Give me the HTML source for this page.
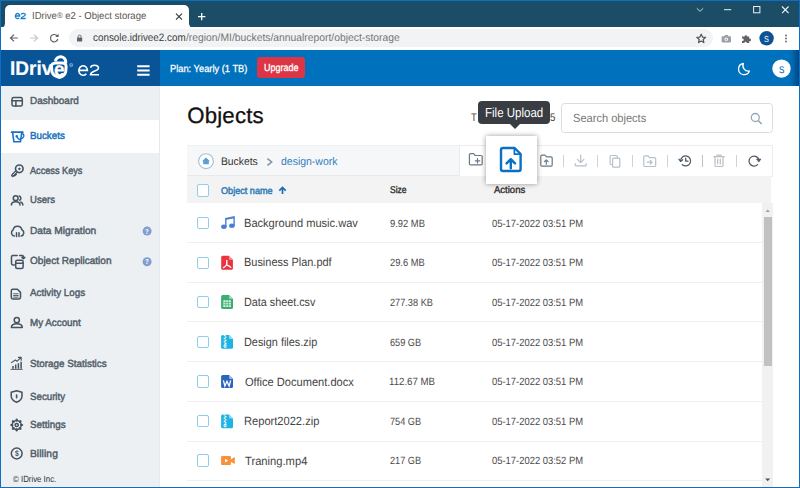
<!DOCTYPE html>
<html>
<head>
<meta charset="utf-8">
<title>IDrive e2 - Object storage</title>
<style>
*{box-sizing:border-box;margin:0;padding:0}
html,body{width:800px;height:488px;overflow:hidden;background:#fff;font-family:"Liberation Sans",sans-serif;}
#win{position:absolute;left:0;top:0;width:800px;height:488px;overflow:hidden;background:#fff}
.abs{position:absolute}
.t{position:absolute;white-space:nowrap;line-height:1;font-family:"Liberation Sans",sans-serif;text-rendering:geometricPrecision}
#titlebar{position:absolute;left:0;top:0;width:800px;height:27px;background:#1b4e66}
#tab{position:absolute;left:5px;top:5px;width:184px;height:23px;background:#fff;border-radius:5px 5px 0 0}
#toolbar{position:absolute;left:0;top:27px;width:800px;height:23px;background:#fff}
#omni{position:absolute;left:68.5px;top:29.2px;width:644px;height:17.8px;border-radius:9px;background:#f1f3f4}
#hdrL{position:absolute;left:0;top:49.5px;width:159.5px;height:36.3px;background:#095497}
#hdrR{position:absolute;left:159.5px;top:49.5px;width:640.5px;height:36.3px;background:#0071bc}
#side{position:absolute;left:0;top:85.8px;width:159.6px;height:402.2px;background:#ecf0f3}
#active{position:absolute;left:0;top:119.5px;width:159.6px;height:33.5px;background:#fff}
#sideb{position:absolute;left:158.9px;top:85.8px;width:1px;height:402.2px;background:#e3eaf0}
.bd{position:absolute;background:#0a6fc5}
.sep{position:absolute;left:187px;width:574.5px;height:1px;background:#efefef}
.cb{position:absolute;left:196.8px;width:12.3px;height:12.4px;border:1.15px solid #8fcdea;border-radius:2px;background:#fff;margin-top:-0.4px}
.vs{position:absolute;top:154.5px;width:1px;height:12.5px;background:#cfd4d9}
#ov{position:absolute;left:0;top:0;width:800px;height:488px;overflow:visible}
#ov2{position:absolute;left:0;top:0;width:800px;height:488px;overflow:visible;z-index:7}
</style>
</head>
<body>
<div id="win">
  <div id="titlebar"></div>
  <div id="tab"></div>
  <div id="toolbar"></div>
  <div id="omni"></div>
  <div id="hdrL"></div>
  <div id="hdrR"></div>
  <div class="abs" id="upg" style="left:257px;top:57.3px;width:48px;height:20.7px;background:#dc3545;border-radius:3px"></div>
  <div id="side"></div>
  <div id="active"></div>
  <div id="sideb"></div>

  <div class="abs" id="search" style="left:561px;top:103.2px;width:212px;height:29.9px;border:1px solid #dcdcdc;border-radius:3.5px;background:#fff"></div>
  <div class="abs" id="crumb" style="left:187px;top:145.3px;width:585.5px;height:31px;background:#f6f7f8;border-top:1px solid #eef0f1;border-bottom:1px solid #e9e9e9"></div>
  <div class="abs" id="tools" style="left:459px;top:145.2px;width:313.8px;height:31.4px;background:#fff;border:1px solid #ececec"></div>
  <div class="abs" id="thead" style="left:187px;top:176.3px;width:583.7px;height:26.5px;background:#f3f3f3"></div>
  <div class="cb" style="top:184.8px"></div>

  <div class="sep" style="top:241.9px"></div>
  <div class="sep" style="top:281.6px"></div>
  <div class="sep" style="top:321.4px"></div>
  <div class="sep" style="top:361px"></div>
  <div class="sep" style="top:400.8px"></div>
  <div class="sep" style="top:440.8px"></div>
  <div class="sep" style="top:480.1px"></div>

  <div class="cb" style="top:217.1px"></div>
  <div class="cb" style="top:256.9px"></div>
  <div class="cb" style="top:296.4px"></div>
  <div class="cb" style="top:336.2px"></div>
  <div class="cb" style="top:375.7px"></div>
  <div class="cb" style="top:415.1px"></div>
  <div class="cb" style="top:454.8px"></div>

  <div class="abs" id="sbtrack" style="left:762.2px;top:203.2px;width:10.8px;height:283.5px;background:#f1f1f1"></div>
  <div class="abs" id="sbthumb" style="left:763.5px;top:217px;width:8.5px;height:149px;background:#c1c1c1"></div>

  <div class="vs" style="left:562.5px"></div>
  <div class="vs" style="left:597px"></div>
  <div class="vs" style="left:632px"></div>
  <div class="vs" style="left:667px"></div>
  <div class="vs" style="left:701.8px;background:#b9c0c7"></div>
  <div class="vs" style="left:736.2px"></div>

  <svg id="ov" viewBox="0 0 800 488">
  <!-- tab curves -->
<path d="M0.5 28 H5 V23 Q5 28 0.5 28Z" fill="#fff"/>
<path d="M189 28 H194 Q189 28 189 23Z" fill="#fff"/>
<!-- favicon -->
<path d="M15.4 16 H19.7 A2.15 2.6 0 1 0 19.1 17.9" stroke="#1a80d2" stroke-width="1.3" fill="none"/>
<path d="M21.3 14.6 C21.4 12.9 25.4 12.9 25.3 14.8 C25.2 16.6 21.1 16.4 21.1 18.5 H25.7" stroke="#1a80d2" stroke-width="1.3" fill="none"/>
<!-- tab close -->
<path d="M176 13.6 L182 19.6 M182 13.6 L176 19.6" stroke="#3c3c3c" stroke-width="1.2" fill="none"/>
<!-- new tab plus -->
<path d="M198 16.6 H205.4 M201.7 12.9 V20.3" stroke="#fff" stroke-width="1.3" fill="none"/>
<!-- window controls -->
<path d="M696.8 8.3 L700 11.3 L703.2 8.3" stroke="#c5d2d9" stroke-width="1" fill="none"/>
<path d="M724 9.7 H731.2" stroke="#e8eef1" stroke-width="1" fill="none"/>
<rect x="753.6" y="6.5" width="6.3" height="6.3" stroke="#e8eef1" stroke-width="1" fill="none"/>
<path d="M782 6.5 L788.6 13.1 M788.6 6.5 L782 13.1" stroke="#f2f5f7" stroke-width="1.1" fill="none"/>
<!-- nav arrows -->
<path d="M17.8 38 H10.6 M14 34.6 L10.5 38 L14 41.4" stroke="#5f6368" stroke-width="1.2" fill="none"/>
<path d="M30.2 38 H37.4 M34 34.6 L37.5 38 L34 41.4" stroke="#c4c7ca" stroke-width="1.2" fill="none"/>
<path d="M57.3 36.2 A3.7 3.7 0 1 0 57.8 39" stroke="#5f6368" stroke-width="1.2" fill="none"/>
<path d="M58.6 33.8 V37 H55.4 Z" fill="#5f6368"/>
<!-- lock -->
<rect x="77" y="37.6" width="5.2" height="4" rx="0.6" fill="#5f6368"/>
<path d="M78.1 37.8 V36.6 A1.5 1.5 0 0 1 81.1 36.6 V37.8" stroke="#5f6368" stroke-width="0.9" fill="none"/>
<!-- star -->
<path d="M701.2 34.2 L702.5 37.1 L705.6 37.4 L703.2 39.5 L703.9 42.6 L701.2 41 L698.5 42.6 L699.2 39.5 L696.8 37.4 L699.9 37.1 Z" stroke="#4e5257" stroke-width="1.15" fill="none" stroke-linejoin="round"/>
<!-- camera -->
<path d="M722.6 36.3 H724.3 L725 35.1 H727.6 L728.3 36.3 H730 Q731 36.3 731 37.3 V41.6 Q731 42.6 730 42.6 H722.6 Q721.6 42.6 721.6 41.6 V37.3 Q721.6 36.3 722.6 36.3Z" fill="#9aa0a6"/>
<circle cx="726.3" cy="39.3" r="1.7" fill="#fff"/>
<circle cx="726.3" cy="39.3" r="0.9" fill="#9aa0a6"/>
<!-- puzzle -->
<path d="M742 36.5 H744.6 A1.3 1.3 0 1 1 747.2 36.5 H749.2 V38.7 A1.3 1.3 0 1 1 749.2 41.1 V43 H746.8 A1.2 1.2 0 1 0 744.4 43 H742 V40.8 A1.2 1.2 0 1 0 742 38.6 Z" fill="#5f6368"/>
<!-- avatar -->
<circle cx="766.6" cy="38.3" r="7.2" fill="#0b5394"/>
<!-- dots -->
<circle cx="786" cy="35.5" r="0.9" fill="#5f6368"/><circle cx="786" cy="38.5" r="0.9" fill="#5f6368"/><circle cx="786" cy="41.5" r="0.9" fill="#5f6368"/>

<!-- header logo: shield + e2 -->
<path d="M51.5 67 Q51.3 63.1 55.5 63 H62.3 Q66.3 63 66.1 67 L65.7 71.5 Q65 76 59.8 77.4 Q53.6 76.4 52 72 Z" stroke="#fff" stroke-width="3" fill="none" stroke-linejoin="round"/>
<path d="M55.5 61.4 A5.1 5.1 0 0 1 65.7 62.2 V63.4" stroke="#fff" stroke-width="3" fill="none"/>
<circle cx="71.2" cy="64.9" r="2" fill="#6a9fcc"/>
<circle cx="71.2" cy="64.9" r="0.8" fill="#2d6fa8"/>
<path d="M79 70.4 H87.4 A4.3 4.75 0 1 0 86.3 73.7" stroke="#fff" stroke-width="1.6" fill="none"/>
<path d="M90.7 67.8 C90.9 64.5 98.6 64.4 98.5 67.9 C98.4 71.2 90.5 71 90.5 74.7 H99" stroke="#fff" stroke-width="1.6" fill="none"/>
<!-- hamburger -->
<path d="M137.2 66.2 H149.6 M137.2 70.5 H149.6 M137.2 74.8 H149.6" stroke="#fff" stroke-width="1.9" fill="none"/>
<!-- moon -->
<path d="M743.4 63.5 A5.6 5.6 0 1 0 749.4 71 A5.4 5.4 0 0 1 743.4 63.5Z" stroke="#fff" stroke-width="1.3" fill="none" stroke-linejoin="round"/>
<!-- user avatar -->
<circle cx="781.5" cy="68.6" r="9.2" fill="#fff"/>

<!-- sidebar icons -->
<g stroke="#465260" stroke-width="1.5" fill="none" stroke-linecap="round" stroke-linejoin="round">
  <rect x="12" y="97.6" width="10.3" height="8.5" rx="1.6"/>
  <path d="M12 100.7 H22.3 M15.9 100.7 V106.1"/>
  <!-- key -->
  <circle cx="19.3" cy="168.8" r="3.8" stroke-width="1.6"/><circle cx="19.3" cy="168.8" r="0.9" fill="#465260" stroke-width="0.6"/>
  <path d="M16.2 171.9 L12.7 175.4" stroke-width="3.3"/>
  <path d="M16 172.1 L13.1 175" stroke="#ecf0f3" stroke-width="0.9"/>
  <path d="M14.6 175.7 L16.1 174.3" stroke-width="1.6"/>
  <!-- users -->
  <circle cx="15.7" cy="198.2" r="2.4"/>
  <path d="M11.4 205 Q11.4 201.8 15.7 201.8 Q20 201.8 20 205"/>
  <path d="M19.2 196 A2.3 2.3 0 0 1 19.6 200.3 M20.8 202 Q22.9 202.8 22.9 205"/>
  <!-- cloud -->
  <path d="M14.3 236 A3.3 3.3 0 0 1 13.1 229.9 A4.5 4.5 0 0 1 21.9 229.8 A3.3 3.3 0 0 1 21.2 236"/>
  <path d="M16.5 232.8 V236.6 M19 232.8 V236.6"/>
  <!-- replication -->
  <path d="M17.2 255.4 H12.9 Q11.5 255.4 11.5 256.8 V263.6 Q11.5 265 12.9 265 H14.3"/>
  <rect x="15.7" y="260.2" width="7.4" height="8.4" rx="1.5"/>
  <path d="M15.7 263.2 H23.1"/>
  <path d="M19.6 255.6 H22.2 Q23.4 255.6 23.4 256.8 V258.4 M22 257.4 L23.4 258.8 L24.8 257.4"/>
  <!-- activity logs -->
  <path d="M12.7 289.3 H17.4 L20.5 292.4 V297.5 Q20.5 298.9 19.1 298.9 H12.7 Q11.3 298.9 11.3 297.5 V290.7 Q11.3 289.3 12.7 289.3Z"/>
  <path d="M13.6 293.8 H18.2 M13.6 295.5 H18.2 M13.6 297.1 H18.2" stroke-width="0.9"/>
  <!-- my account -->
  <circle cx="16.8" cy="320.1" r="2.6"/>
  <path d="M11.4 327.5 Q11.4 323.7 16.8 323.7 Q22.3 323.7 22.3 327.5 Z"/>
  <!-- stats -->
  <path d="M13 368.8 V366 M15.7 368.8 V364.6 M18.4 368.8 V363.2 M21.1 368.8 V361.8" stroke-width="1.5" stroke-linecap="butt"/>
  <path d="M11 369.4 H22.2" stroke-width="0.9"/>
  <path d="M11.4 362.6 L15.4 360 L17 361.4 L20.8 357.6 M18.4 357.4 H21.2 V360.2" stroke-width="1.1"/>
  <!-- shield -->
  <path d="M16.6 390.7 L22 392.3 V396 Q22 400.2 16.6 402.2 Q11.2 400.2 11.2 396 V392.3 Z"/>
  <path d="M16.6 395 V397.8" stroke-width="1.6"/>
  <!-- gear -->
  <circle cx="16.7" cy="425" r="4.5"/>
  <circle cx="16.7" cy="425" r="1.6"/>
  <path d="M16.7 419.6 V420.6 M16.7 429.4 V430.4 M11.3 425 H12.3 M21.1 425 H22.1 M12.9 421.2 L13.6 421.9 M19.8 428.1 L20.5 428.8 M12.9 428.8 L13.6 428.1 M19.8 421.9 L20.5 421.2" stroke-width="2.2"/>
  <!-- billing -->
  <circle cx="16.7" cy="453.5" r="5.4"/>
</g>
<!-- bucket (active blue) -->
<g stroke="#1873c4" stroke-width="1.4" fill="none" stroke-linecap="round" stroke-linejoin="round">
  <path d="M11.6 132.2 H22.8" stroke-width="1.8"/>
  <path d="M12.6 132.4 L13.9 141.8 H20.4 L21.8 132.4" stroke-width="1.6"/>
  <path d="M22.2 133.7 Q24.4 134.1 23.6 136.7 Q22.8 138.6 21 138.6"/>
  <circle cx="16.7" cy="136.2" r="0.6"/>
  <path d="M16.9 136.6 Q17.9 139.5 20.5 139.8"/>
</g>
<!-- help circles -->
<circle cx="147.1" cy="231.1" r="4.5" fill="#7f9fd0"/>
<circle cx="147.1" cy="261.8" r="4.5" fill="#7f9fd0"/>

<!-- breadcrumb home -->
<circle cx="206" cy="161.2" r="7.4" stroke="#a3bfd4" stroke-width="1.1" fill="#fff"/>
<path d="M206 157.6 L210 161.2 H208.8 V164.2 H203.2 V161.2 H202 Z" fill="#5b9fd3"/>
<path d="M267.4 158.7 L271.7 162 L267.4 165.3" stroke="#8090a0" stroke-width="1.5" fill="none"/>
<!-- sort arrow -->
<path d="M282.5 193.9 V187.6 M279.3 190.6 L282.5 187.4 L285.7 190.6" stroke="#1a6fb5" stroke-width="1.7" fill="none"/>
<!-- search icon -->
<circle cx="755.3" cy="117.5" r="4" stroke="#93a6ba" stroke-width="1.3" fill="none"/>
<path d="M758.3 120.6 L761.7 124" stroke="#93a6ba" stroke-width="1.5" fill="none"/>

<!-- toolbar icons -->
<g stroke="#6b7886" stroke-width="1.2" fill="none" stroke-linejoin="round" stroke-linecap="round">
  <!-- folder plus -->
  <path d="M469.4 154.8 Q469.4 153.7 470.5 153.7 H473.6 L475.2 155.5 H481.1 Q482.2 155.5 482.2 156.6 V163.8 Q482.2 164.9 481.1 164.9 H470.5 Q469.4 164.9 469.4 163.8 Z"/>
  <path d="M475.3 160.9 H479.7 M477.5 158.7 V163.1"/>
  <!-- folder upload -->
  <path d="M540.8 156.2 Q540.8 155.1 541.9 155.1 H545 L546.6 156.9 H551.1 Q552.2 156.9 552.2 158 V165.1 Q552.2 166.2 551.1 166.2 H541.9 Q540.8 166.2 540.8 165.1 Z"/>
  <path d="M546.3 164.2 V160 M544.4 161.7 L546.3 159.8 L548.2 161.7"/>
</g>
<g stroke="#b7bfc8" stroke-width="1.2" fill="none" stroke-linejoin="round" stroke-linecap="round">
  <!-- download -->
  <path d="M580.7 155 V162.4 M577.5 159.4 L580.7 162.6 L583.9 159.4"/>
  <path d="M575.2 163.6 V165 Q575.2 165.9 576.1 165.9 H585.3 Q586.2 165.9 586.2 165 V163.6"/>
  <!-- copy -->
  <path d="M617.3 157.6 V156.4 Q617.3 155.5 616.4 155.5 H611 Q610.1 155.5 610.1 156.4 V163.6 Q610.1 164.5 611 164.5 H612"/>
  <rect x="612.6" y="158.2" width="7.2" height="9" rx="0.9"/>
  <!-- move folder -->
  <path d="M643.8 156.9 Q643.8 155.8 644.9 155.8 H648 L649.6 157.6 H654.6 Q655.7 157.6 655.7 158.7 V165.4 Q655.7 166.5 654.6 166.5 H644.9 Q643.8 166.5 643.8 165.4 Z"/>
  <path d="M647.2 162.2 H652 M650.3 160.4 L652.1 162.2 L650.3 164"/>
  <!-- trash -->
  <path d="M713.8 156.6 H724.2 M717 156.4 V155.2 H721 V156.4"/>
  <path d="M715 156.8 V165.4 Q715 166.5 716.1 166.5 H721.9 Q723 166.5 723 165.4 V156.8"/>
  <path d="M717.7 159.2 V164 M720.3 159.2 V164"/>
</g>
<g stroke="#4d5864" stroke-width="1.25" fill="none" stroke-linejoin="round" stroke-linecap="round">
  <!-- history -->
  <path d="M680.6 160.9 A5 5 0 1 1 682.3 164.7"/>
  <path d="M678.9 159.2 L680.6 161.4 L682.7 159.7"/>
  <path d="M685.7 158.2 V161.2 H688"/>
  <!-- refresh -->
  <path d="M758.9 160 A5 5 0 1 0 757.6 164.6"/>
  <path d="M756.7 159 H761 L758.9 161.9 Z" fill="#4d5864" stroke-width="0.6"/>
</g>

<!-- file icons -->
<!-- music -->
<g fill="#4b7fd2">
  <ellipse cx="223.9" cy="226.8" rx="2.8" ry="2.2"/>
  <ellipse cx="231.9" cy="225.8" rx="2.8" ry="2.2"/>
  <path d="M225.1 218 L234.8 216.1 V225.8 H233.4 V218.4 L226.5 219.7 V226.8 H225.1 Z"/>
</g>
<!-- pdf -->
<g transform="translate(221.2,255.8)">
  <path d="M1.5 0 H7.7 L11.7 4 V12.5 Q11.7 14 10.2 14 H1.5 Q0 14 0 12.5 V1.5 Q0 0 1.5 0Z" fill="#e9333f"/>
  <path d="M7.7 0 L11.7 4 H8.7 Q7.7 4 7.7 3Z" fill="#f59aa0"/>
  <path d="M5.6 4.6 Q6.2 7.5 5.2 9.2 Q4 11 2.3 11.8 M5.4 9 Q7.6 9.6 9.6 11.6 M5.7 4.8 Q5.2 6.8 5.6 8.8" stroke="#fff" stroke-width="1.3" fill="none" stroke-linecap="round"/>
</g>
<!-- csv -->
<g transform="translate(221.1,295.1)">
  <path d="M1.5 0 H7.9 L11.9 4 V12.4 Q11.9 13.9 10.4 13.9 H1.5 Q0 13.9 0 12.4 V1.5 Q0 0 1.5 0Z" fill="#3dad74"/>
  <path d="M7.9 0 L11.9 4 H8.9 Q7.9 4 7.9 3Z" fill="#8fd9b3"/>
  <rect x="2.2" y="5.2" width="7.6" height="6.8" rx="0.6" fill="#d8f1e4"/>
  <path d="M4.7 5.2 V12 M7.3 5.2 V12 M2.2 7.5 H9.8 M2.2 9.7 H9.8" stroke="#3dad74" stroke-width="0.7"/>
</g>
<!-- zip -->
<g id="zipicon" transform="translate(221.1,334.9)">
  <path d="M1.5 0 H7.9 L11.9 4 V12.4 Q11.9 13.9 10.4 13.9 H1.5 Q0 13.9 0 12.4 V1.5 Q0 0 1.5 0Z" fill="#1db3e3"/>
  <path d="M7.9 0 L11.9 4 H8.9 Q7.9 4 7.9 3Z" fill="#8edcf5"/>
  <path d="M2.6 0.6 H4.4 M3.6 2.2 H5.4 M2.6 3.8 H4.4 M3.6 5.4 H5.4 M2.6 7 H4.4 M3.6 8.4 H5.4" stroke="#fff" stroke-width="1.2"/>
  <rect x="2.6" y="9.4" width="2.8" height="3.4" rx="1" fill="#fff"/>
  <rect x="3.5" y="10.6" width="1" height="1.4" fill="#1db3e3"/>
</g>
<!-- docx -->
<g transform="translate(221.1,374.9)">
  <path d="M1.5 0 H7.9 L11.9 4 V11.7 Q11.9 13.2 10.4 13.2 H1.5 Q0 13.2 0 11.7 V1.5 Q0 0 1.5 0Z" fill="#2b63c0"/>
  <path d="M7.9 0 L11.9 4 H8.9 Q7.9 4 7.9 3Z" fill="#8db8f0"/>
  <path d="M2.3 5.4 L3.8 11.2 L5.9 6.4 L8 11.2 L9.6 5.4" stroke="#fff" stroke-width="1.3" fill="none" stroke-linejoin="miter"/>
</g>
<!-- zip2 -->
<g transform="translate(221.1,414.4)">
  <path d="M1.5 0 H7.9 L11.9 4 V12.4 Q11.9 13.9 10.4 13.9 H1.5 Q0 13.9 0 12.4 V1.5 Q0 0 1.5 0Z" fill="#1db3e3"/>
  <path d="M7.9 0 L11.9 4 H8.9 Q7.9 4 7.9 3Z" fill="#8edcf5"/>
  <path d="M2.6 0.6 H4.4 M3.6 2.2 H5.4 M2.6 3.8 H4.4 M3.6 5.4 H5.4 M2.6 7 H4.4 M3.6 8.4 H5.4" stroke="#fff" stroke-width="1.2"/>
  <rect x="2.6" y="9.4" width="2.8" height="3.4" rx="1" fill="#fff"/>
  <rect x="3.5" y="10.6" width="1" height="1.4" fill="#1db3e3"/>
</g>
<!-- mp4 -->
<g fill="#f7923a">
  <rect x="221.1" y="456.1" width="9.8" height="9" rx="1.2"/>
  <path d="M230.6 459.4 L234.8 457 V464 L230.6 461.7 Z"/>
  <path d="M225.1 458.7 L228.1 460.6 L225.1 462.5 Z" fill="#fff"/>
</g>
<!-- scrollbar arrows -->
<path d="M765.4 212 L767.7 209.6 L770 212 Z" fill="#a3a3a3"/>
<path d="M765.2 478.6 L767.7 481.2 L770.2 478.6 Z" fill="#505050"/>

  </svg>

<div class="t" id="tabtitle" style="left:32.06px;top:12.00px;font-size:10.2px;color:#5b5650;letter-spacing:0.000px;transform:scaleX(0.9360);transform-origin:0 0;">IDrive<span style="font-size:0.8em;position:relative;top:-0.15em">®</span> e2 - Object storage</div>
<div class="t" id="url1" style="left:92.50px;top:33.00px;font-size:10.8px;color:#3a3a3a;letter-spacing:0.000px;transform:scaleX(0.9139);transform-origin:0 0;">console.idrivee2.com</div>
<div class="t" id="url2" style="left:185.50px;top:33.00px;font-size:10.8px;color:#757575;letter-spacing:0.000px;transform:scaleX(0.9574);transform-origin:0 0;">/region/MI/buckets/annualreport/object-storage</div>
<div class="t" id="plan" style="left:170.40px;top:65.00px;font-size:10.2px;color:#fff;letter-spacing:0.000px;-webkit-text-stroke:0.25px #fff;transform:scaleX(0.9129);transform-origin:0 0;">Plan: Yearly (1 TB)</div>
<div class="t" id="upgt" style="left:264.00px;top:64.00px;font-size:10.2px;color:#fff;letter-spacing:0.000px;-webkit-text-stroke:0.3px #fff;transform:scaleX(0.8821);transform-origin:0 0;">Upgrade</div>
<div class="t" id="n1" style="left:29.70px;top:97.00px;font-size:10.25px;color:#525e6a;letter-spacing:0.000px;-webkit-text-stroke:0.45px #525e6a;transform:scaleX(0.9720);transform-origin:0 0;">Dashboard</div>
<div class="t" id="n2" style="left:29.70px;top:132.00px;font-size:10.25px;color:#1a73ba;letter-spacing:0.000px;-webkit-text-stroke:0.45px #1a73ba;transform:scaleX(0.9541);transform-origin:0 0;">Buckets</div>
<div class="t" id="n3" style="left:29.70px;top:167.00px;font-size:10.25px;color:#525e6a;letter-spacing:0.000px;-webkit-text-stroke:0.45px #525e6a;transform:scaleX(0.8932);transform-origin:0 0;">Access Keys</div>
<div class="t" id="n4" style="left:29.70px;top:196.00px;font-size:10.25px;color:#525e6a;letter-spacing:0.000px;-webkit-text-stroke:0.45px #525e6a;transform:scaleX(0.9333);transform-origin:0 0;">Users</div>
<div class="t" id="n5" style="left:29.70px;top:227.00px;font-size:10.25px;color:#525e6a;letter-spacing:0.000px;-webkit-text-stroke:0.45px #525e6a;transform:scaleX(0.9940);transform-origin:0 0;">Data Migration</div>
<div class="t" id="n6" style="left:29.70px;top:257.00px;font-size:10.25px;color:#525e6a;letter-spacing:0.000px;-webkit-text-stroke:0.45px #525e6a;transform:scaleX(0.9795);transform-origin:0 0;">Object Replication</div>
<div class="t" id="n7" style="left:29.70px;top:289.00px;font-size:10.25px;color:#525e6a;letter-spacing:0.000px;-webkit-text-stroke:0.45px #525e6a;transform:scaleX(0.9569);transform-origin:0 0;">Activity Logs</div>
<div class="t" id="n8" style="left:29.70px;top:319.00px;font-size:10.25px;color:#525e6a;letter-spacing:0.000px;-webkit-text-stroke:0.45px #525e6a;transform:scaleX(0.9574);transform-origin:0 0;">My Account</div>
<div class="t" id="n9" style="left:29.70px;top:360.00px;font-size:10.25px;color:#525e6a;letter-spacing:0.000px;-webkit-text-stroke:0.45px #525e6a;transform:scaleX(0.9612);transform-origin:0 0;">Storage Statistics</div>
<div class="t" id="n10" style="left:29.90px;top:393.00px;font-size:10.25px;color:#525e6a;letter-spacing:0.000px;-webkit-text-stroke:0.45px #525e6a;transform:scaleX(0.9474);transform-origin:0 0;">Security</div>
<div class="t" id="n11" style="left:29.90px;top:421.00px;font-size:10.25px;color:#525e6a;letter-spacing:0.000px;-webkit-text-stroke:0.45px #525e6a;transform:scaleX(0.9622);transform-origin:0 0;">Settings</div>
<div class="t" id="n12" style="left:29.90px;top:450.00px;font-size:10.25px;color:#525e6a;letter-spacing:0.100px;-webkit-text-stroke:0.45px #525e6a;">Billing</div>
<div class="t" id="copy" style="left:12.60px;top:475.00px;font-size:9.0px;color:#333;letter-spacing:0.000px;transform:scaleX(0.8714);transform-origin:0 0;">© IDrive Inc.</div>
<div class="t" id="h1" style="left:187.20px;top:105.00px;font-size:22.2px;color:#111;letter-spacing:0.217px;-webkit-text-stroke:0.3px #111;">Objects</div>
<div class="t" id="searchph" style="left:572.70px;top:113.00px;font-size:11.8px;color:#777;letter-spacing:0.000px;transform:scaleX(0.9385);transform-origin:0 0;">Search objects</div>
<div class="t" id="bc1" style="left:220.66px;top:157.00px;font-size:11px;color:#333;letter-spacing:0.000px;transform:scaleX(0.9368);transform-origin:0 0;">Buckets</div>
<div class="t" id="bc2" style="left:281.40px;top:157.00px;font-size:11px;color:#2f7fbd;letter-spacing:0.000px;transform:scaleX(0.9525);transform-origin:0 0;">design-work</div>
<div class="t" id="th1" style="left:221.00px;top:187.00px;font-size:9.8px;color:#2a7ab8;letter-spacing:0.000px;-webkit-text-stroke:0.45px #2a7ab8;transform:scaleX(0.9286);transform-origin:0 0;">Object name</div>
<div class="t" id="th2" style="left:389.80px;top:186.00px;font-size:9.8px;color:#333;letter-spacing:0.000px;-webkit-text-stroke:0.4px #333;transform:scaleX(0.8684);transform-origin:0 0;">Size</div>
<div class="t" id="th3" style="left:494.10px;top:186.00px;font-size:9.8px;color:#333;letter-spacing:0.000px;-webkit-text-stroke:0.4px #333;transform:scaleX(0.9719);transform-origin:0 0;">Actions</div>
<div class="t" id="f0" style="left:243.77px;top:218.00px;font-size:11.9px;color:#444;letter-spacing:0.000px;transform:scaleX(0.9314);transform-origin:0 0;">Background music.wav</div>
<div class="t" id="s0" style="left:390.40px;top:219.00px;font-size:10.5px;color:#4a4a4a;letter-spacing:0.000px;transform:scaleX(0.8936);transform-origin:0 0;">9.92 MB</div>
<div class="t" id="d0" style="left:492.20px;top:219.00px;font-size:10.5px;color:#4a4a4a;letter-spacing:0.000px;transform:scaleX(0.8960);transform-origin:0 0;">05-17-2022 03:51 PM</div>
<div class="t" id="f1" style="left:243.78px;top:257.00px;font-size:11.9px;color:#444;letter-spacing:0.000px;transform:scaleX(0.9207);transform-origin:0 0;">Business Plan.pdf</div>
<div class="t" id="s1" style="left:390.40px;top:258.00px;font-size:10.5px;color:#4a4a4a;letter-spacing:0.000px;transform:scaleX(0.8872);transform-origin:0 0;">29.6 MB</div>
<div class="t" id="d1" style="left:492.20px;top:258.00px;font-size:10.5px;color:#4a4a4a;letter-spacing:0.000px;transform:scaleX(0.8960);transform-origin:0 0;">05-17-2022 03:51 PM</div>
<div class="t" id="f2" style="left:243.79px;top:297.00px;font-size:11.9px;color:#444;letter-spacing:0.000px;transform:scaleX(0.9077);transform-origin:0 0;">Data sheet.csv</div>
<div class="t" id="s2" style="left:390.40px;top:298.00px;font-size:10.5px;color:#4a4a4a;letter-spacing:0.000px;transform:scaleX(0.8745);transform-origin:0 0;">277.38 KB</div>
<div class="t" id="d2" style="left:492.20px;top:298.00px;font-size:10.5px;color:#4a4a4a;letter-spacing:0.000px;transform:scaleX(0.8960);transform-origin:0 0;">05-17-2022 03:51 PM</div>
<div class="t" id="f3" style="left:243.78px;top:337.00px;font-size:11.9px;color:#444;letter-spacing:0.000px;transform:scaleX(0.9152);transform-origin:0 0;">Design files.zip</div>
<div class="t" id="s3" style="left:390.40px;top:338.00px;font-size:10.5px;color:#4a4a4a;letter-spacing:0.000px;transform:scaleX(0.8743);transform-origin:0 0;">659 GB</div>
<div class="t" id="d3" style="left:492.20px;top:338.00px;font-size:10.5px;color:#4a4a4a;letter-spacing:0.000px;transform:scaleX(0.8960);transform-origin:0 0;">05-17-2022 03:51 PM</div>
<div class="t" id="f4" style="left:244.70px;top:377.00px;font-size:11.9px;color:#444;letter-spacing:0.000px;transform:scaleX(0.9321);transform-origin:0 0;">Office Document.docx</div>
<div class="t" id="s4" style="left:389.48px;top:377.00px;font-size:10.5px;color:#4a4a4a;letter-spacing:0.000px;transform:scaleX(0.9204);transform-origin:0 0;">112.67 MB</div>
<div class="t" id="d4" style="left:492.20px;top:377.00px;font-size:10.5px;color:#4a4a4a;letter-spacing:0.000px;transform:scaleX(0.8960);transform-origin:0 0;">05-17-2022 03:51 PM</div>
<div class="t" id="f5" style="left:243.77px;top:416.00px;font-size:11.9px;color:#444;letter-spacing:0.000px;transform:scaleX(0.9342);transform-origin:0 0;">Report2022.zip</div>
<div class="t" id="s5" style="left:390.40px;top:417.00px;font-size:10.5px;color:#4a4a4a;letter-spacing:0.000px;transform:scaleX(0.8743);transform-origin:0 0;">754 GB</div>
<div class="t" id="d5" style="left:492.20px;top:417.00px;font-size:10.5px;color:#4a4a4a;letter-spacing:0.000px;transform:scaleX(0.8960);transform-origin:0 0;">05-17-2022 03:51 PM</div>
<div class="t" id="f6" style="left:244.70px;top:456.00px;font-size:11.9px;color:#444;letter-spacing:0.000px;transform:scaleX(0.9402);transform-origin:0 0;">Traning.mp4</div>
<div class="t" id="s6" style="left:390.40px;top:456.00px;font-size:10.5px;color:#4a4a4a;letter-spacing:0.000px;transform:scaleX(0.8743);transform-origin:0 0;">217 GB</div>
<div class="t" id="d6" style="left:492.20px;top:456.00px;font-size:10.5px;color:#4a4a4a;letter-spacing:0.000px;transform:scaleX(0.8960);transform-origin:0 0;">05-17-2022 03:52 PM</div>
<div class="t" id="totT" style="left:471.20px;top:113.00px;font-size:11px;color:#444;letter-spacing:0.000px;transform:scaleX(0.8571);transform-origin:0 0;">T</div>
<div class="t" id="tot5" style="left:550.20px;top:113.00px;font-size:11px;color:#444;letter-spacing:0.000px;transform:scaleX(0.8833);transform-origin:0 0;">5</div>
<div class="t" id="tiptext" style="left:485.02px;top:106.00px;font-size:13.1px;color:#fff;letter-spacing:0.000px;z-index:6;transform:scaleX(0.8785);transform-origin:0 0;">File Upload</div>
<div class="t" id="logo" style="left:9.64px;top:60.00px;font-size:19.8px;color:#fff;letter-spacing:0.000px;font-weight:bold;-webkit-text-stroke:0.2px #fff;transform:scaleX(0.9605);transform-origin:0 0;">IDriv</div>
<div class="t" id="logoe" style="left:53.80px;top:61.00px;font-size:19.8px;color:#fff;letter-spacing:0.000px;font-weight:bold;-webkit-text-stroke:0.2px #fff;transform:scaleX(0.9545);transform-origin:0 0;">e</div>
<div class="t" id="avS" style="left:764.20px;top:35.00px;font-size:8.8px;color:#fff;letter-spacing:0.000px;transform:scaleX(0.8333);transform-origin:0 0;">S</div>
<div class="t" id="avs" style="left:779.20px;top:63.00px;font-size:12.6px;color:#1a73ba;letter-spacing:0.000px;transform:scaleX(0.8667);transform-origin:0 0;">s</div>
<div class="t" id="q1" style="left:145.40px;top:228.00px;font-size:7.2px;color:#fff;letter-spacing:0.000px;font-weight:bold;transform:scaleX(0.8500);transform-origin:0 0;">?</div>
<div class="t" id="q2" style="left:145.40px;top:258.00px;font-size:7.2px;color:#fff;letter-spacing:0.000px;font-weight:bold;transform:scaleX(0.8500);transform-origin:0 0;">?</div>
<div class="t" id="dollar" style="left:14.60px;top:450.00px;font-size:8px;color:#4b5661;letter-spacing:0.000px;font-weight:bold;transform:scaleX(0.8400);transform-origin:0 0;">$</div>


  <div class="abs" id="pop" style="left:486px;top:135.6px;width:51.2px;height:48.2px;background:#fff;box-shadow:0 0 5px rgba(0,0,0,0.4);z-index:4"></div>
  <div class="abs" id="tip" style="left:478px;top:100.5px;width:71.5px;height:23.5px;background:#393d42;border-radius:4px;z-index:5"></div>
  <div class="abs" id="tiparrow" style="left:509.5px;top:123.9px;width:0;height:0;border-left:5.4px solid transparent;border-right:5.4px solid transparent;border-top:5.1px solid #393d42;z-index:5"></div>
  <svg id="ov2" viewBox="0 0 800 488">
  <g stroke="#0a6fc5" stroke-width="2.4" fill="none" stroke-linejoin="round" stroke-linecap="round">
  <path d="M503 148 H514.6 L520.6 154 V169 Q520.6 171 518.6 171 H503 Q501 171 501 169 V150 Q501 148 503 148Z"/>
  <path d="M514.4 148.4 V154.2 H520.4" stroke-width="1.7"/>
  <path d="M510.8 168.2 V159.6 M506.6 163.4 L510.8 159.2 L515 163.4"/>
</g>

  </svg>

  <div class="abs" style="left:789px;top:49.5px;width:10px;height:36.3px;background:linear-gradient(to right,rgba(0,40,90,0),rgba(0,40,90,0.15) 40%,rgba(0,40,90,0.6));z-index:8"></div>
  <div class="bd" style="left:0;top:0;width:800px;height:1px;z-index:9"></div>
  <div class="bd" style="left:0;top:0;width:1.2px;height:488px;z-index:9"></div>
  <div class="bd" style="left:798.5px;top:0;width:1.5px;height:488px;z-index:9"></div>
  <div class="bd" style="left:0;top:486.8px;width:800px;height:1.2px;z-index:9"></div>
</div>
</body>
</html>
